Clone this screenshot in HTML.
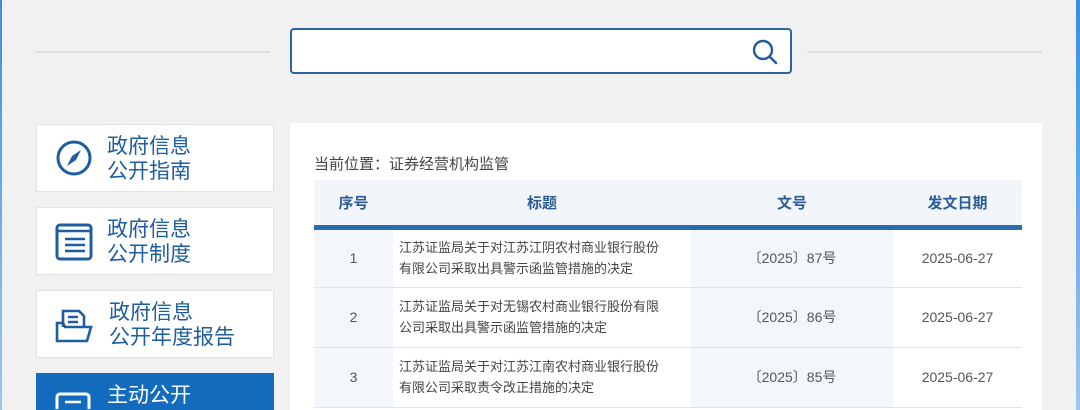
<!DOCTYPE html>
<html style="width:1080px;height:410px;overflow:hidden"><head><meta charset="utf-8"><style>
*{margin:0;padding:0;box-sizing:border-box}
body{width:1080px;height:410px;overflow:hidden;background:#f1f1f1;font-family:"Liberation Sans","Noto Sans CJK SC",sans-serif;position:relative}
.edgeL{position:absolute;left:0;top:0;width:2px;height:410px;background:linear-gradient(#3a8ee0,#9cc8f0)}
.edgeR{position:absolute;right:0;top:0;width:4px;height:410px;background:linear-gradient(#3a8ee0,#9cc8f0)}
.line{position:absolute;top:51px;height:2px;background:#dedede}
.search{position:absolute;left:290px;top:28px;width:502px;height:46px;border:2px solid #2c64a6;border-radius:4px;background:#fff}
.side{position:absolute;left:36px;width:238px;height:68px;background:#fff;border:1px solid #e2e2e2;overflow:hidden}
.side .t{position:absolute;left:70px;top:9px;font-size:21px;line-height:25px;color:#1e5d9f}
.side svg{position:absolute;left:18px;top:14px}
.side.act{background:#136bbe;border-color:#136bbe;height:37px}
.side.act .t{color:#fff}
.panel{position:absolute;left:290px;top:123px;width:752px;height:287px;background:#fff}
.crumb{position:absolute;left:314px;top:153px;font-size:15px;color:#444}
table{position:absolute;left:314px;top:180px;border-collapse:collapse;width:708px}
th{height:47px;background:#f2f5fa;color:#2a5d98;font-size:15px;font-weight:bold;border-bottom:5px solid #2a6cb0}
td{height:60px;border-bottom:1px solid #e3e3e3;font-size:14px;color:#555;text-align:center}
td.g{background:#f3f7fb}
td.l{text-align:left;padding-left:6px;line-height:21px;font-size:13px;color:#444}
</style></head><body>
<div class="edgeL"></div><div class="edgeR"></div>
<div class="line" style="left:35px;width:235px"></div>
<div class="line" style="left:807px;width:235px"></div>
<div class="search"><svg width="30" height="30" viewBox="0 0 30 30" style="position:absolute;right:10px;top:7px"><circle cx="13" cy="13" r="9" fill="none" stroke="#1f5d9e" stroke-width="2.4"/><path d="M20 20l6 6" stroke="#1f5d9e" stroke-width="2.6" stroke-linecap="round"/></svg></div>

<div class="side" style="top:124px"><svg width="38" height="38" viewBox="0 0 38 38"><circle cx="19" cy="19" r="16" fill="none" stroke="#1e5d9f" stroke-width="3"/><path d="M26 11L21 21 12 27 17 17Z" fill="#1e5d9f"/></svg><div class="t">政府信息<br>公开指南</div></div>
<div class="side" style="top:207px"><svg width="38" height="40" viewBox="0 0 38 40"><rect x="2" y="3" width="34" height="34" rx="3" fill="none" stroke="#1e5d9f" stroke-width="3"/><path d="M2 9h34M10 17h20M10 23h20M10 29h20" stroke="#1e5d9f" stroke-width="2.5"/></svg><div class="t">政府信息<br>公开制度</div></div>
<div class="side" style="top:290px"><svg width="40" height="40" viewBox="0 0 40 40"><path d="M8 22V6h16l5 5v12M13 12h10M13 17h10" fill="none" stroke="#1e5d9f" stroke-width="2.6"/><path d="M2 36V18h6l2 4h26l-4 14Z" fill="none" stroke="#1e5d9f" stroke-width="2.6"/></svg><div class="t" style="left:72px">政府信息<br>公开年度报告</div></div>
<div class="side act" style="top:373px"><svg width="38" height="38" viewBox="0 0 38 38"><rect x="2" y="6" width="32" height="30" rx="3" fill="none" stroke="#fff" stroke-width="3"/><path d="M10 14h16" stroke="#fff" stroke-width="2.5"/></svg><div class="t">主动公开</div></div>

<div class="panel"></div>
<div class="crumb">当前位置：证券经营机构监管</div>
<table>
<tr><th style="width:79px">序号</th><th style="width:298px">标题</th><th style="width:202px">文号</th><th>发文日期</th></tr>
<tr><td class="g">1</td><td class="l">江苏证监局关于对江苏江阴农村商业银行股份<br>有限公司采取出具警示函监管措施的决定</td><td class="g">〔2025〕87号</td><td>2025-06-27</td></tr>
<tr><td class="g">2</td><td class="l">江苏证监局关于对无锡农村商业银行股份有限<br>公司采取出具警示函监管措施的决定</td><td class="g">〔2025〕86号</td><td>2025-06-27</td></tr>
<tr><td class="g">3</td><td class="l">江苏证监局关于对江苏江南农村商业银行股份<br>有限公司采取责令改正措施的决定</td><td class="g">〔2025〕85号</td><td>2025-06-27</td></tr>
</table>
</body></html>
